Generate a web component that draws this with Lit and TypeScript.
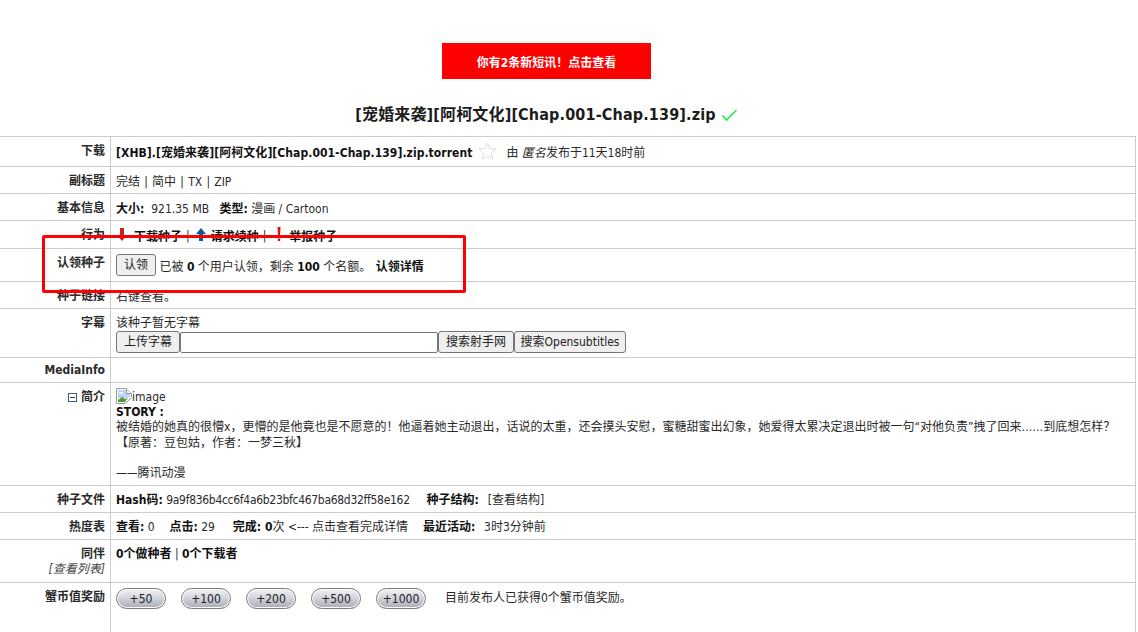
import { LitElement, html, css } from "lit";
import { customElement } from "lit/decorators.js";

@customElement("app-root")
export class AppRoot extends LitElement {
  static styles = css`
    :host { display: block; position: relative; height: 632px; overflow: hidden; background: #fff; color: #2a2a2a;
      font-family: "DejaVu Sans Condensed", "Noto Sans CJK SC", sans-serif; font-size: 12px; }
    .top { display: flex; flex-direction: column; align-items: center; padding: 43px 45px 0 0; height: 136px; box-sizing: border-box; }
    .banner { width: 209px; height: 36px; background: #f00; color: #fff; font-weight: bold; display: flex; align-items: center; justify-content: center; }
    .title { margin: 25px 0 0; font-size: 16px; font-weight: bold; line-height: 22px; color: #1c1c1c; display: flex; align-items: center; gap: 5px; letter-spacing: .15px; }
    table { border-collapse: collapse; width: 1137px; table-layout: fixed; margin-left: -1px; }
    td { border: 1px solid #ccc; padding: 6px 5px 4px; line-height: 16px; vertical-align: top; box-sizing: border-box; }
    td.l { width: 111px; text-align: right; font-weight: bold; }
    td.lo { padding-top: 7px; padding-bottom: 3px; }
    .r30 td { height: 30px; }
    .r27 td { height: 27px; }
    .r28 td { height: 28px; padding-bottom: 0; }
    .r33 td { height: 33px; padding-bottom: 0; }
    .r49 td { height: 49px; padding-bottom: 0; }
    .r25 td { height: 25px; padding: 5px; line-height: 14px; }
    .r102 td { height: 102px; }
    .r102 td.c { padding-top: 5px; padding-bottom: 4px; }
    .r43 td { height: 43px; }
    .r60 td { height: 60px; }
    .r60 td.c { padding-top: 5px; }
    .one { display: flex; align-items: center; height: 18px; margin-top: 1px; }
    .dl { font-weight: bold; color: #111; letter-spacing: .06px; }
    .star { margin: -4px 9px 0 6px; flex: none; }
    .by i { font-style: italic; }
    .by { white-space: pre; }
    .sp { word-spacing: .8px; }
    .sep { margin: 0 5px 0 4px; }
    b { color: #111; }
    .acts { display: flex; align-items: center; height: 18px; }
    .act { display: inline-flex; align-items: center; font-weight: bold; gap: 4px; color: #111; padding-top: 2px; }
    .act svg { margin-top: -5px; }
    .first { gap: 6px; }
    .last svg { margin-left: 2px; }
    .claim { display: flex; align-items: center; height: 22px; white-space: pre; margin-top: -1px; }
    .claim span { padding-top: 4px; }
    .more { margin-left: 1px; }
    button { font: inherit; height: 22px; padding: 0 7px; border: 1px solid #767676; border-radius: 3px; background: #efefef; color: #222; flex: none; }
    .os { padding: 0 5.500px; }
    .inp { height: 21px; width: 258px; border: 1px solid #767676; border-radius: 2px; box-sizing: border-box; background: #fff; flex: none; }
    .line { display: flex; align-items: center; height: 22px; }
    .pl { display: block; line-height: 15.2px; }
    .img { vertical-align: -3px; }
    .minus { display: inline-block; vertical-align: -1px; margin-right: 4px; }
    .sub { display: block; font-weight: normal; font-style: italic; color: #444; line-height: 15px; }
    .hash { letter-spacing: -.3px; }
    .gap { display: inline-block; width: 8px; }
    .gap2 { display: inline-block; width: 10px; }
    .gap3 { display: inline-block; width: 11px; }
    .pad { display: inline-block; width: 2px; }
    .bonus { display: flex; align-items: center; gap: 15px; }
    .pill { width: 50px; height: 21px; box-sizing: border-box; border: 1px solid #7d7d7d; border-radius: 11px; font-size: 12px; color: #222;
      box-shadow: inset 0 0 0 1px #fff; background: linear-gradient(#f2f2f5, #d4d6dd 45%, #a9abb8); padding: 0; }
    .bonus span { margin-left: 4px; margin-top: -1px; }
    .frame { position: absolute; left: 42px; top: 235px; width: 424px; height: 58px; box-sizing: border-box; border: 3px solid #f00; border-radius: 2px; pointer-events: none; }
  `;

  render() {
    return html`
      <div class="top">
        <div class="banner">你有2条新短讯！点击查看</div>
        <h1 class="title">[宠婚来袭][阿柯文化][Chap.001-Chap.139].zip
          <svg width="17" height="13" viewBox="0 0 17 13"><path d="M1.500 6.500l4 4.500L15.500 1" fill="none" stroke="#2ee84a" stroke-width="1.700"/></svg>
        </h1>
      </div>
      <table>
        <tr class="r30"><td class="l">下载</td><td>
          <div class="one"><span class="dl">[XHB].[宠婚来袭][阿柯文化][Chap.001-Chap.139].zip.torrent</span>
          <svg class="star" width="19" height="18" viewBox="0 0 19 18"><path d="M9.500 1l2.400 5.600 6 .5-4.600 4 1.400 6-5.200-3.200L4.300 17l1.400-6L1 7l6.100-.5z" fill="#fff" stroke="#ddd"/></svg>
          <span class="by">由 <i>匿名</i>发布于11天18时前</span></div>
        </td></tr>
        <tr class="r27"><td class="l">副标题</td><td class="sp lo">完结 | 简中 | TX | ZIP</td></tr>
        <tr class="r27"><td class="l">基本信息</td><td class="lo"><b>大小:</b>&nbsp; 921.35 MB &nbsp; <b>类型:</b> 漫画 / Cartoon</td></tr>
        <tr class="r28"><td class="l">行为</td><td>
          <div class="acts">
          <span class="act first"><svg width="12" height="15" viewBox="0 0 12 15"><path d="M4 1h4v7h3l-5 6-5-6h3z" fill="#c22"/></svg>下载种子</span>
          <span class="sep">|</span>
          <span class="act"><svg width="12" height="15" viewBox="0 0 12 15"><path d="M6 1l5 6H8v7H4V7H1z" fill="#0a5c9c"/></svg>请求续种</span>
          <span class="sep">|</span>
          <span class="act last"><svg width="12" height="15" viewBox="0 0 12 15"><path d="M4.500 0h3l-.6 10H5.100zM4.800 11.500h2.400V14H4.800z" fill="#d11"/></svg>举报种子</span>
          </div>
        </td></tr>
        <tr class="r33"><td class="l">认领种子</td><td><div class="claim"><button>认领</button><span> 已被 <b>0</b> 个用户认领，剩余 <b>100</b> 个名额。 <b class="more">认领详情</b></span></div></td></tr>
        <tr class="r27"><td class="l">种子链接</td><td class="lo">右键查看。</td></tr>
        <tr class="r49"><td class="l">字幕</td><td>该种子暂无字幕
          <div class="line"><button>上传字幕</button><span class="inp"></span><button>搜索射手网</button><button class="os">搜索Opensubtitles</button></div>
        </td></tr>
        <tr class="r25"><td class="l">MediaInfo</td><td></td></tr>
        <tr class="r102"><td class="l"><svg class="minus" width="9" height="9" viewBox="0 0 9 9"><rect x=".5" y=".5" width="8" height="8" fill="#fff" stroke="#3a5a8c"/><path d="M2 4.500h5" stroke="#24406e"/></svg>简介</td><td class="c">
          <span class="pl"><svg class="img" width="16" height="16" viewBox="0 0 16 16"><path d="M.5.500h10l5 5v4l-6 6H.5z" fill="#fff" stroke="#9a9aa4"/><path d="M10.500.500v5h5" fill="#f2f2f6" stroke="#9a9aa4"/><path d="M2 2h8v4h4v3l-4 1H2z" fill="#bcd2f2"/><path d="M3 4h4v2H3z" fill="#eef4fd"/><path d="M2 14v-2l4-3 3 2 3-1-3 4z" fill="#4f9e32"/></svg>image</span>
          <span class="pl"><b>STORY :</b></span>
          <span class="pl">被结婚的她真的很懵x，更懵的是他竟也是不愿意的！他逼着她主动退出，话说的太重，还会摸头安慰，蜜糖甜蜜出幻象，她爱得太累决定退出时被一句“对他负责”拽了回来……到底想怎样？</span>
          <span class="pl">【原著：豆包姑，作者：一梦三秋】</span>
          <span class="pl">&nbsp;</span>
          <span class="pl">——腾讯动漫</span>
        </td></tr>
        <tr class="r27"><td class="l">种子文件</td><td><b>Hash码:</b> <span class="hash">9a9f836b4cc6f4a6b23bfc467ba68d32ff58e162</span> <span class="gap2"></span> <b>种子结构:</b>&nbsp;<span class="pad"></span> [查看结构]</td></tr>
        <tr class="r27"><td class="l">热度表</td><td><b>查看:</b> 0 <span class="gap"></span> <b>点击:</b> 29 <span class="gap3"></span> <b>完成: 0</b>次 &lt;--- 点击查看完成详情 <span class="gap"></span> <b>最近活动:</b>&nbsp;<span class="pad"></span> 3时3分钟前</td></tr>
        <tr class="r43"><td class="l">同伴<span class="sub">[查看列表]</span></td><td><b>0个做种者</b> | <b>0个下载者</b></td></tr>
        <tr class="r60"><td class="l">蟹币值奖励</td><td class="c">
          <div class="bonus"><button class="pill">+50</button><button class="pill">+100</button><button class="pill">+200</button><button class="pill">+500</button><button class="pill">+1000</button><span>目前发布人已获得0个蟹币值奖励。</span></div>
        </td></tr>
      </table>
      <div class="frame"></div>
    `;
  }
}
